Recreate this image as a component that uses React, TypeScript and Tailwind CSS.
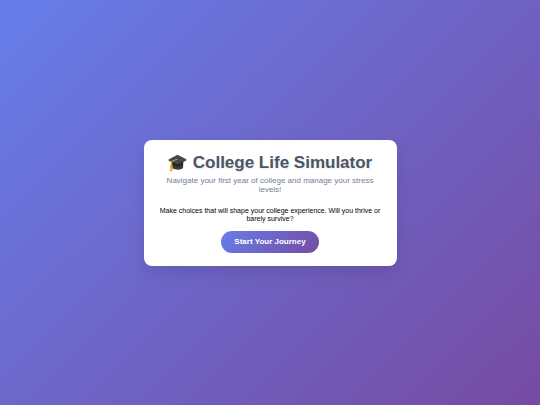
function GraduationCap() {
  return (
    <svg viewBox="0 0 128 128" className="h-[19px] w-[19px] shrink-0" aria-hidden="true">
      <path d="M28 58v38c0 9 18 16 38 16s36-7 36-16V58L66 74z" fill="#343a3d" />
      <path d="M28 66l38 16 36-16v12L66 92 28 78z" fill="#25292b" />
      <path d="M4 44L64 12l60 30-58 34z" fill="#41474a" />
      <path d="M4 44l62 32 58-34v6L66 84 4 50z" fill="#1f2325" />
      <path d="M64 42C48 46 30 51 25 60c-3 14-3 24-4 34" fill="none" stroke="#e0a52c" strokeWidth="8" strokeLinecap="round" />
      <path d="M15 86h14l4 32c-5 7-16 7-22 3z" fill="#f2b632" />
      <path d="M15 86h14v7H15z" fill="#c98b1b" />
      <ellipse cx="64" cy="42" rx="6" ry="4" fill="#6b6550" />
    </svg>
  );
}

export default function App() {
  return (
    <main className="flex min-h-screen items-center justify-center bg-[linear-gradient(135deg,#667eea_0%,#764ba2_100%)] p-2 text-center font-['Liberation_Sans',Arial,sans-serif]">
      <section className="w-full max-w-[253px] rounded-lg bg-white p-[13px] shadow-[0_8px_17px_rgba(0,0,0,0.1)]">
        <h1 className="mb-1 flex items-center justify-center gap-1.5 text-[17px] leading-[19px] font-bold whitespace-nowrap text-[#4a5568] [text-shadow:1px_1px_2px_rgba(0,0,0,0.1)]">
          <GraduationCap />
          College Life Simulator
        </h1>
        <p className="mb-[13px] text-[8px] leading-[9px] text-[#718096]">
          Navigate your first year of college and manage your stress levels!
        </p>
        <p className="mb-2 text-[7px] leading-[8px] text-black">
          Make choices that will shape your college experience. Will you thrive or barely survive?
        </p>
        <button
          type="button"
          className="mx-auto block h-[22px] rounded-full bg-[linear-gradient(135deg,#667eea_0%,#764ba2_100%)] px-[13px] text-[8px] leading-[9px] font-bold text-white"
        >
          Start Your Journey
        </button>
      </section>
    </main>
  );
}
